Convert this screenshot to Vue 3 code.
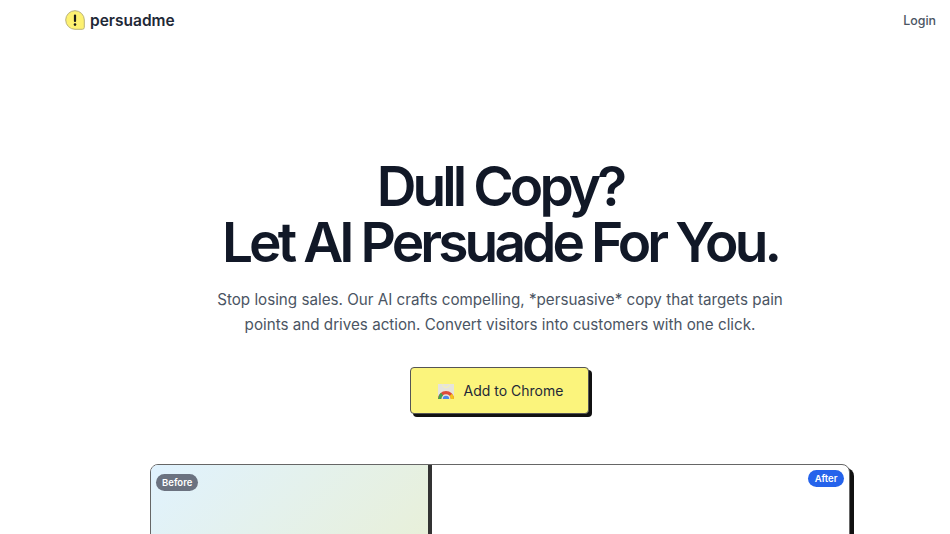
<script setup>
const badgeBefore = 'Before'
const badgeAfter = 'After'
</script>

<template>
  <div class="viewport">
    <div class="page">
      <header class="nav">
        <a class="brand">
          <svg class="logo" width="20" height="20" viewBox="0 0 20 20">
            <path d="M10 .7a9.300 9.300 0 0 1 9.300 9.300v7.300a2 2 0 0 1-2 2H10A9.300 9.300 0 0 1 10 .7z" fill="#fdf171" stroke="#b9b27a" stroke-width="1"/>
            <rect x="8.900" y="4.400" width="2.200" height="7.600" rx="1" fill="#1a1a1a"/>
            <circle cx="10" cy="14.600" r="1.300" fill="#1a1a1a"/>
          </svg>
          <span class="brand-name">persuadme</span>
        </a>
        <a class="login">Login</a>
      </header>

      <section class="hero">
        <h1>Dull Copy?<br />Let AI Persuade For You.</h1>
        <p class="sub">Stop losing sales. Our AI crafts compelling, *persuasive* copy that targets pain points and drives action. Convert visitors into customers with one click.</p>
        <button class="cta">
          <svg class="store" width="18" height="18" viewBox="0 0 18 18">
            <path d="M1 2h16v15H1z" fill="#e6e4dc"/>
            <path d="M5.500 2.500a3.500 3 0 0 0 7 0" fill="none" stroke="#f6f3b0" stroke-width="1"/>
            <path d="M1 17a8 8 0 0 1 16 0h-3.200a4.800 4.800 0 0 0-9.600 0z" fill="#dd4b39"/>
            <path d="M1 17a8 8 0 0 1 3-6.200l2.200 2.600A4.800 4.800 0 0 0 4.200 17z" fill="#3fa34d"/>
            <path d="M17 17a8 8 0 0 0-2-5.300l-2.300 2.200a4.800 4.800 0 0 1 1.100 3.100z" fill="#f5c518"/>
            <path d="M5.800 17a3.200 3.200 0 0 1 6.400 0z" fill="#4a86e8"/>
          </svg>
          <span>Add to Chrome</span>
        </button>
      </section>

      <section class="compare">
        <div class="before">
          <span class="badge gray">{{ badgeBefore }}</span>
        </div>
        <div class="divider"></div>
        <div class="after">
          <span class="badge blue">{{ badgeAfter }}</span>
        </div>
      </section>
    </div>
  </div>
</template>

<style scoped>
.viewport {
  width: 950px;
  height: 534px;
  overflow: hidden;
  background: #fff;
}
.page {
  width: 1000px;
  height: 534px;
  font-family: Inter, "Liberation Sans", sans-serif;
  color: #111827;
}
.nav {
  display: flex;
  align-items: center;
  justify-content: space-between;
  height: 40px;
  padding: 0 64px 0 65px;
}
.brand {
  display: flex;
  align-items: center;
  gap: 5px;
}
.brand-name {
  font-size: 15.500px;
  font-weight: 600;
  color: #1f2937;
}
.login {
  font-size: 12.400px;
  font-weight: 500;
  color: #4b5563;
}
.hero {
  display: flex;
  flex-direction: column;
  align-items: center;
  padding-top: 118px;
}
h1 {
  margin: 0;
  font-size: 55px;
  line-height: 56px;
  font-weight: 600;
  letter-spacing: -3.900px;
  text-align: center;
  color: #111827;
}
.sub {
  margin: 17px 0 0;
  width: 600px;
  font-size: 15.200px;
  line-height: 25px;
  text-align: center;
  color: #4b5563;
}
.cta {
  box-sizing: border-box;
  display: flex;
  align-items: center;
  gap: 9px;
  margin: 30px 2px 0 0;
  width: 179px;
  height: 47px;
  padding: 0 0 0 26px;
  border: 1px solid #555;
  border-radius: 4px;
  background: #fbf47c;
  box-shadow: 3px 3px 0 #111;
  font-family: inherit;
  font-size: 14px;
  font-weight: 400;
  color: #1f2937;
}
.compare {
  box-sizing: border-box;
  display: flex;
  width: 700px;
  height: 200px;
  margin: 50px auto 0;
  border: 1px solid #666;
  border-radius: 8px 8px 0 0;
  box-shadow: 4px 4px 0 #111;
  overflow: hidden;
  background: #fff;
}
.before {
  box-sizing: border-box;
  width: 277px;
  padding: 5px;
  background: linear-gradient(135deg, #e0f2fe, #ebefcc);
}
.divider {
  width: 4px;
  background: #333;
}
.after {
  flex: 1;
  padding: 5px;
  display: flex;
  justify-content: flex-end;
  align-items: flex-start;
}
.badge {
  display: inline-block;
  height: 17px;
  padding: 0 6px;
  border-radius: 9px;
  font-size: 9.500px;
  line-height: 17px;
  font-weight: 600;
  color: #fff;
}
.gray { background: #6b7280; }
.blue { background: #2563eb; padding: 0 6.500px; }
</style>

<style>
html, body { margin: 0; background: #fff; overflow: hidden; }
</style>
